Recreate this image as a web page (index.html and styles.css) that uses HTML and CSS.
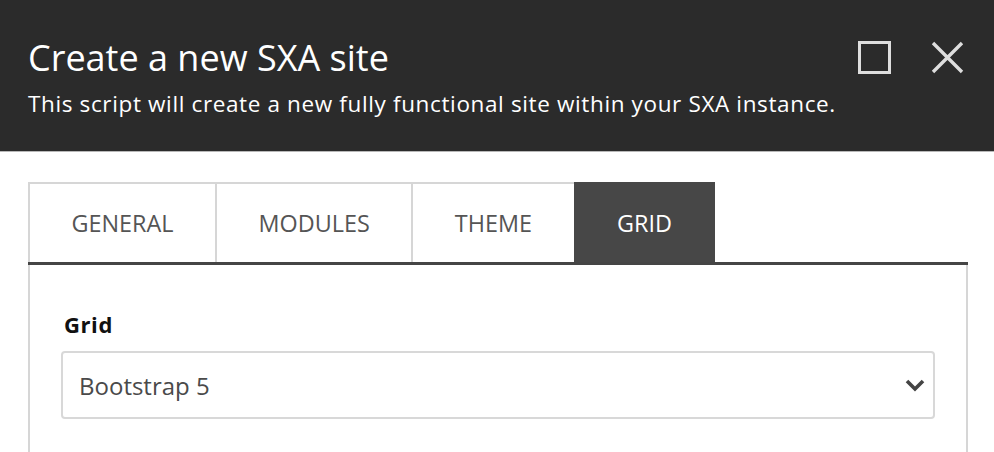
FILE: index.html
```html
<!DOCTYPE html>
<html lang="en">
<head>
<meta charset="utf-8">
<title>Create a new SXA site</title>
<link rel="stylesheet" href="styles.css">
</head>
<body>
<header class="dialog-header">
  <div class="header-text">
    <h1 class="title">Create a new SXA site</h1>
    <p class="subtitle">This script will create a new fully functional site within your SXA instance.</p>
  </div>
  <div class="header-actions">
    <svg class="icon" width="33" height="33" viewBox="0 0 33 33" aria-label="Maximize">
      <rect x="1.5" y="1.5" width="30" height="30" fill="none" stroke="#dedede" stroke-width="3"/>
    </svg>
    <svg class="icon" width="33" height="33" viewBox="0 0 33 33" aria-label="Close">
      <path d="M2 2 L31 31 M31 2 L2 31" fill="none" stroke="#dedede" stroke-width="3.4"/>
    </svg>
  </div>
</header>
<main class="content">
  <nav class="tabs">
    <div class="tab">GENERAL</div>
    <div class="tab">MODULES</div>
    <div class="tab">THEME</div>
    <div class="tab active">GRID</div>
  </nav>
  <section class="panel">
    <label class="field-label">Grid</label>
    <div class="select">
      <span class="select-value">Bootstrap 5</span>
      <svg class="chevron" width="20" height="14" viewBox="0 0 20 14">
        <path d="M2 3 L10 11 L18 3" fill="none" stroke="#444" stroke-width="3.6"/>
      </svg>
    </div>
  </section>
</main>
</body>
</html>
```
FILE: styles.css
```css
html, body {
  margin: 0;
  padding: 0;
  background: #ffffff;
  font-family: "Open Sans", "Noto Sans", sans-serif;
  overflow: hidden;
}

.dialog-header {
  height: 151px;
  background: #2b2b2b;
  border-bottom: 1px solid #b8b8b8;
  display: flex;
  justify-content: space-between;
  align-items: flex-start;
  padding: 0 30px 0 28px;
  box-sizing: content-box;
}

.header-text {
  padding-top: 34px;
}

.title {
  margin: 0;
  color: #ffffff;
  font-weight: 400;
  font-size: 36px;
  line-height: 48px;
}

.subtitle {
  margin: 8px 0 0 0;
  color: #ffffff;
  font-size: 22.5px;
  letter-spacing: 0.63px;
  line-height: 28px;
}

.header-actions {
  display: flex;
  gap: 40px;
  padding-top: 41px;
}

.icon {
  display: block;
}

.content {
  padding: 30px 26px 0 28px;
}

.tabs {
  display: flex;
  border-bottom: 3px solid #454545;
}

.tab {
  height: 78px;
  padding: 0 41.5px;
  border: 2px solid #d6d6d6;
  border-bottom: none;
  margin-right: -2px;
  display: flex;
  align-items: center;
  font-size: 23.4px;
  color: #555555;
  background: #ffffff;
}

.tab.active {
  background: #474747;
  border-color: #474747;
  color: #ffffff;
  position: relative;
}

.panel {
  border-left: 2px solid #d6d6d6;
  border-right: 2px solid #d6d6d6;
  padding: 45px 31px 0 31px;
  height: 187px;
  box-sizing: border-box;
}

.field-label {
  display: block;
  font-weight: 700;
  font-size: 22px;
  letter-spacing: 0.6px;
  line-height: 28px;
  color: #111111;
  padding-left: 3px;
  margin-bottom: 13px;
}

.select {
  height: 64px;
  border: 2px solid #d8d8d8;
  border-radius: 4px;
  display: flex;
  align-items: center;
  justify-content: space-between;
  padding: 0 8px 0 16px;
}

.select-value {
  font-size: 24px;
  color: #4a4a4a;
}

.chevron {
  display: block;
}
```
